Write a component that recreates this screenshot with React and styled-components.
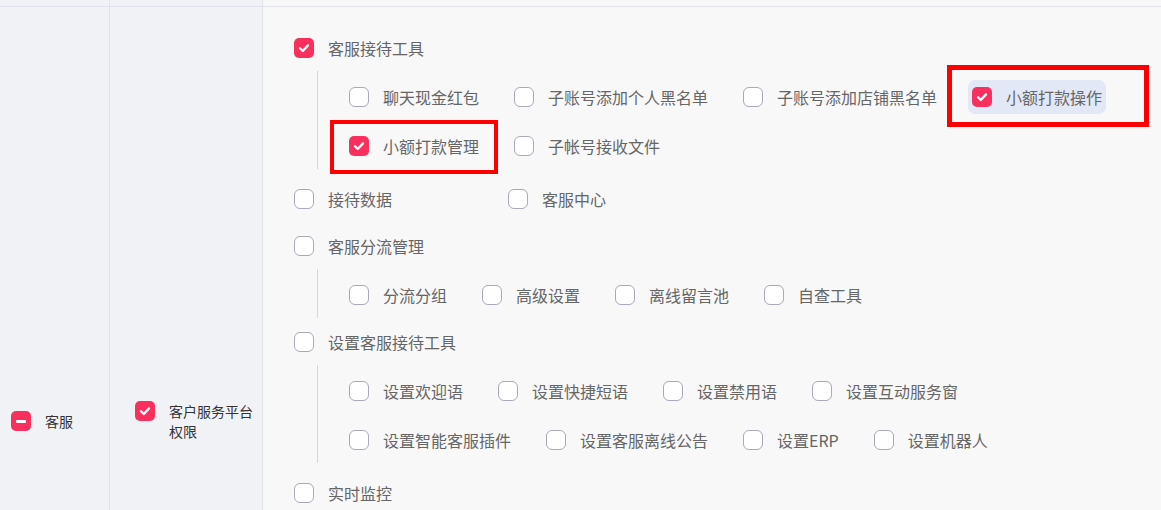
import React from 'react'
import styled, { createGlobalStyle } from 'styled-components'

const Global = createGlobalStyle`
  html, body {
    margin: 0;
    padding: 0;
    overflow: hidden;
    background: #f8f8f8;
    font-family: "Noto Sans CJK SC", "Noto Sans", sans-serif;
  }
`

const Table = styled.div`
  display: grid;
  grid-template-columns: 110px 153px 1fr;
  width: 1161px;
`

const Cell = styled.div`
  box-sizing: border-box;
  background: ${p => (p.$side ? '#f8f8f8' : '#f1f2f5')};
  border-right: ${p => (p.$side ? 'none' : '1px solid #e2e3ea')};
  border-bottom: ${p => (p.$top ? '1px solid #e2e3ea' : 'none')};
  height: ${p => (p.$top ? '7px' : 'auto')};
`

const NameCell = styled(Cell)`
  min-height: 828px;
  display: flex;
  align-items: center;
  padding: ${p => p.$pad};
`

const NameBox = styled.div`
  display: flex;
  align-items: flex-start;
  gap: 14px;
  font-size: 14px;
  line-height: 20px;
  color: #333;
`

const Panel = styled(Cell)`
  padding: 17px 20px 0 31px;
`

const Box = styled.span`
  box-sizing: border-box;
  flex: none;
  width: 20px;
  height: 20px;
  border-radius: ${p => (p.$on ? '5px' : '6px')};
  background: ${p => (p.$on ? '#f9305d' : '#fff')};
  border: ${p => (p.$on ? 'none' : '1px solid #a9a9ba')};
  display: flex;
  align-items: center;
  justify-content: center;
`

const Dash = styled.span`
  width: 10px;
  height: 3px;
  border-radius: 1px;
  background: #fff;
`

const Check = ({ on, half }) => (
  <Box $on={on || half}>
    {half && <Dash />}
    {on && !half && (
      <svg width="20" height="20" viewBox="0 0 20 20">
        <polyline points="6,10.2 8.8,13 14,7.4" fill="none" stroke="#fff" strokeWidth="2.3" strokeLinecap="round" strokeLinejoin="round" />
      </svg>
    )}
  </Box>
)

const Header = styled.div`
  display: flex;
  align-items: center;
  gap: 14px;
  height: 47px;
  font-size: 16px;
  color: #666;
`

const Sub = styled.div`
  display: flex;
  flex-wrap: wrap;
  column-gap: 27px;
  row-gap: 15px;
  margin-left: 23px;
  padding: 9px 0 6px 27px;
  border-left: 1px solid #d6d6de;
`

const Item = styled.label`
  position: relative;
  display: inline-flex;
  align-items: center;
  gap: 14px;
  height: 34px;
  padding: 0 4px;
  border-radius: 7px;
  font-size: 16px;
  color: #666;
  white-space: nowrap;
  background: ${p => (p.$hover ? '#e2e8f6' : 'transparent')};
`

const Mark = styled.span`
  position: absolute;
  top: ${p => p.$t}px;
  left: ${p => p.$l}px;
  right: ${p => p.$r}px;
  bottom: ${p => p.$b}px;
  border: ${p => p.$w}px solid #ff0000;
  pointer-events: none;
`

const Leaves = styled.div`
  display: flex;
  align-items: center;
  height: 47px;
  margin-top: 6px;
`

const Leaf = styled.div`
  display: flex;
  align-items: center;
  gap: 14px;
  width: 214px;
  font-size: 16px;
  color: #666;
`

const Opt = ({ label, on, hover, mark }) => (
  <Item $hover={hover}>
    <Check on={on} />
    {label}
    {mark && <Mark $t={mark[0]} $r={mark[1]} $b={mark[2]} $l={mark[3]} $w={mark[4]} />}
  </Item>
)

export default function App() {
  return (
    <>
      <Global />
      <Table>
        <Cell $top />
        <Cell $top />
        <Cell $top $side />

        <NameCell $pad="0 0 0 11px">
          <NameBox>
            <Check half />
            <span>客服</span>
          </NameBox>
        </NameCell>
        <NameCell $pad="0 8px 0 25px">
          <NameBox>
            <Check on />
            <span>客户服务平台权限</span>
          </NameBox>
        </NameCell>

        <Panel $side>
          <Header><Check on />客服接待工具</Header>
          <Sub>
            <Opt label="聊天现金红包" />
            <Opt label="子账号添加个人黑名单" />
            <Opt label="子账号添加店铺黑名单" />
            <Opt label="小额打款操作" on hover mark={[-15, -43, -13, -21, 5]} />
            <Opt label="小额打款管理" on mark={[-9, -15, -11, -15, 4]} />
            <Opt label="子帐号接收文件" />
          </Sub>
          <Leaves>
            <Leaf><Check />接待数据</Leaf>
            <Leaf><Check />客服中心</Leaf>
          </Leaves>
          <Header><Check />客服分流管理</Header>
          <Sub>
            <Opt label="分流分组" />
            <Opt label="高级设置" />
            <Opt label="离线留言池" />
            <Opt label="自查工具" />
          </Sub>
          <Header><Check />设置客服接待工具</Header>
          <Sub>
            <Opt label="设置欢迎语" />
            <Opt label="设置快捷短语" />
            <Opt label="设置禁用语" />
            <Opt label="设置互动服务窗" />
            <Opt label="设置智能客服插件" />
            <Opt label="设置客服离线公告" />
            <Opt label="设置ERP" />
            <Opt label="设置机器人" />
          </Sub>
          <Leaves>
            <Leaf><Check />实时监控</Leaf>
          </Leaves>
        </Panel>
      </Table>
    </>
  )
}
